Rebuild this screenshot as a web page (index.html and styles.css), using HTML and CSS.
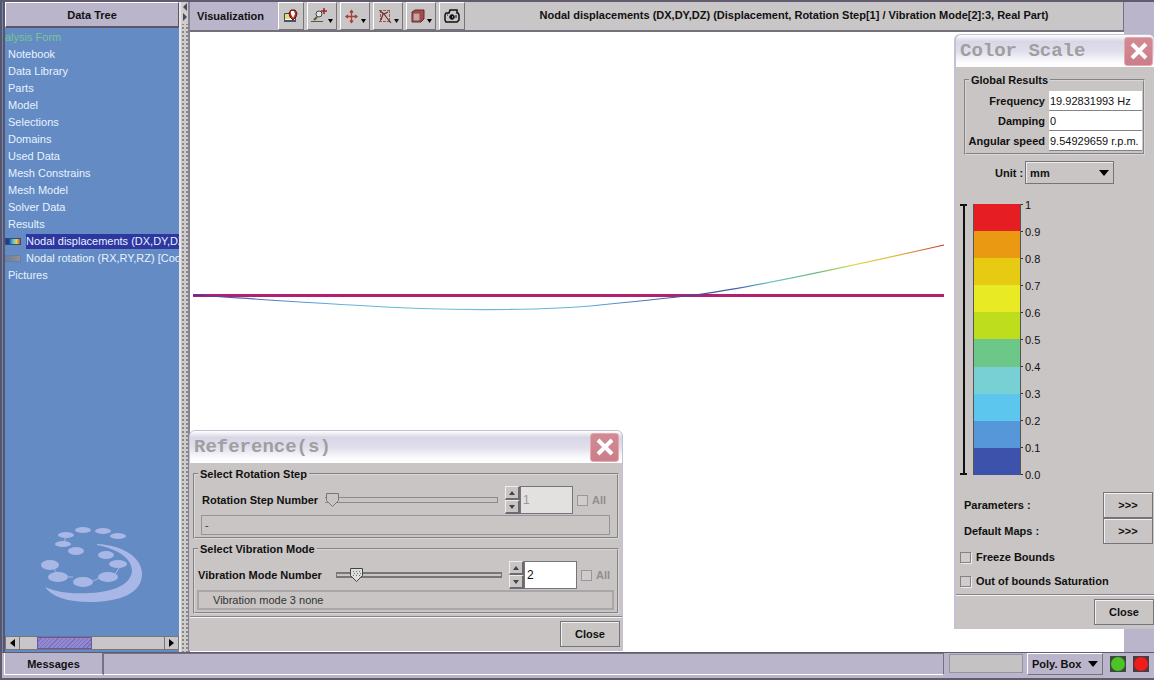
FILE: index.html
```html
<!DOCTYPE html>
<html lang="en">
<head>
<meta charset="utf-8">
<title>Visualization</title>
<link rel="stylesheet" href="styles.css">
</head>
<body>
<div class="app">
  <div class="main">
    <aside class="sidebar">
      <h2 class="sidebar-title">Data Tree</h2>
      <ul class="tree">
        <li class="tree-root">alysis Form</li>
        <li>Notebook</li>
        <li>Data Library</li>
        <li>Parts</li>
        <li>Model</li>
        <li>Selections</li>
        <li>Domains</li>
        <li>Used Data</li>
        <li>Mesh Constrains</li>
        <li>Mesh Model</li>
        <li>Solver Data</li>
        <li>Results</li>
        <li class="leaf"><i class="swatch swatch-color"></i><span class="selected">Nodal displacements (DX,DY,DZ)</span></li>
        <li class="leaf"><i class="swatch swatch-gray"></i><span>Nodal rotation (RX,RY,RZ) [Coordinates]</span></li>
        <li>Pictures</li>
      </ul>
      <svg class="logo" width="104" height="80" viewBox="0 0 104 80" fill="#a9b7e6">
        <path d="M57 17C82 18 102 30 102 47C102 66 80 75 50 75C28 75 12 70 5 60C18 66 34 67 50 66C76 65 92 56 92 43C91 31 78 22 57 18Z"/>
        <path d="M26 9 24 16M13 40l5 8M74 49l5-8M28 50h5M53 54l6-3" stroke="#a9b7e6" fill="none"/>
        <ellipse cx="43" cy="3" rx="8" ry="3"/><ellipse cx="63" cy="4" rx="8" ry="3"/><ellipse cx="78" cy="9" rx="8" ry="3"/>
        <ellipse cx="26" cy="8" rx="8" ry="3"/><ellipse cx="23" cy="17" rx="8" ry="3"/><ellipse cx="36" cy="24" rx="8" ry="4"/>
        <ellipse cx="66" cy="28" rx="8" ry="4"/><ellipse cx="78" cy="37" rx="9" ry="4"/><ellipse cx="68" cy="50" rx="10" ry="5"/>
        <ellipse cx="43" cy="55" rx="10" ry="5"/><ellipse cx="18" cy="50" rx="10" ry="5"/><ellipse cx="10" cy="38" rx="9" ry="5"/>
      </svg>
      <div class="scrollbar">
        <button class="scroll-btn" aria-label="Scroll left"><svg width="5" height="8"><path d="M5 0v8L0 4z"/></svg></button>
        <div class="scroll-track"><div class="scroll-thumb"></div></div>
        <button class="scroll-btn" aria-label="Scroll right"><svg width="5" height="8"><path d="M0 0v8l5-4z"/></svg></button>
      </div>
    </aside>
    <div class="splitter">
      <svg width="8" height="22" fill="#444a66"><path d="M5 1v8L1 5zM1 11v8l4-4z"/></svg>
    </div>
    <section class="workspace">
      <header class="toolbar">
        <h1 class="toolbar-title">Visualization</h1>
        <div class="tools">
          <button class="tool" aria-label="Display properties"><svg width="18" height="18" viewBox="0 0 18 18"><path d="M2.500 6.500h11v8h-11z" fill="#fff" stroke="#446"/><path d="M3 7h5v5H3z" fill="#e8dc70"/><path d="M2 13h12v2H2z" fill="#456"/><path d="M9 3h4l2 3-1 4-3 3-3-3-1-4z" fill="#b0302a" stroke="#611"/><path d="M9 4h3l1 3-2 4-2-4z" fill="#fff"/></svg></button>
          <button class="tool menu" aria-label="Zoom"><svg width="24" height="20" viewBox="0 0 24 20"><circle cx="9" cy="8" r="3" fill="#dde8dd" stroke="#445"/><path d="M7 11l-3 3" stroke="#665522" stroke-width="2"/><path d="M1 15.500h12" stroke="#555"/><path d="M14 2v6M11 5h6" stroke="#a02020" stroke-width="1.500"/><path d="M18 13h5l-2.500 4z"/></svg></button>
          <button class="tool menu" aria-label="Move"><svg width="24" height="20" viewBox="0 0 24 20"><path d="M8.500 5v11M3 10.500h11M7 6.500l1.500-2 1.500 2M7 14.500l1.500 2 1.500-2M5 9l-2 1.500L5 12M12 9l2 1.500-2 1.500" fill="none" stroke="#a44038" stroke-width="1.300"/><path d="M18 13h5l-2.500 4z"/></svg></button>
          <button class="tool menu" aria-label="Select area"><svg width="24" height="20" viewBox="0 0 24 20" fill="none"><path d="M3 4.500h12M3 15.500h12M4.500 4v12M13.500 4v12" stroke="#a85048" stroke-dasharray="3 1"/><path d="M4 5l4 3 4-2M7 8l-2 6M8 8l3 4 4 5" stroke="#643030" stroke-width="1.200"/><path d="M18 13h5l-2.500 4z" fill="#111"/></svg></button>
          <button class="tool menu" aria-label="View cube"><svg width="24" height="20" viewBox="0 0 24 20"><path d="M3 6l3-2h9v9l-3 3H3z" fill="#a84848" stroke="#632a2a"/><path d="M4 7h7v8H4z" fill="#c8a5a5" stroke="#844"/><path d="M18 13h5l-2.500 4z"/></svg></button>
          <button class="tool" aria-label="Snapshot"><svg width="18" height="16" viewBox="0 0 18 16" fill="none" stroke="#111"><path d="M3 5h3l1-3h7v3h1l1 2v5l-2 2H3l-1-2V7z" stroke-width="1.500"/><circle cx="9" cy="9" r="2.300" fill="#111"/><path d="M9 9h1" stroke="#fff"/><path d="M4 7h1M13 7v3"/></svg></button>
        </div>
        <p class="result-title">Nodal displacements (DX,DY,DZ) (Displacement, Rotation Step[1] / Vibration Mode[2]:3, Real Part)</p>
      </header>
      <div class="canvas">
        <svg class="plot" viewBox="0 0 934 620" preserveAspectRatio="xMinYMin meet">
          <defs>
            <linearGradient id="amp" gradientUnits="userSpaceOnUse" x1="3" y1="0" x2="754" y2="0">
              <stop offset="0" stop-color="#333a99"/><stop offset=".06" stop-color="#4866b4"/><stop offset=".2" stop-color="#62b4dc"/>
              <stop offset=".38" stop-color="#6cc0cc"/><stop offset=".52" stop-color="#62aee0"/><stop offset=".66" stop-color="#3a4ca0"/>
              <stop offset=".72" stop-color="#4060a8"/><stop offset=".77" stop-color="#68c4c8"/><stop offset=".83" stop-color="#62b478"/>
              <stop offset=".88" stop-color="#d8dc48"/><stop offset=".94" stop-color="#e0b040"/><stop offset="1" stop-color="#c83028"/>
            </linearGradient>
          </defs>
          <path d="M3 263.500H754" stroke="#b3206f" stroke-width="3"/>
          <path d="M3 263C50 266 120 271 170 273.500C250 279 350 279 410 273C450 269 480 266 512 262C570 254 670 232 754 213" fill="none" stroke="url(#amp)" stroke-width="1.200"/>
        </svg>
      </div>

      <div class="window reference">
        <div class="titlebar"><h2>Reference(s)</h2><button class="win-close" aria-label="Close window"><svg width="20" height="20"><path d="M3 3l14 14M17 3L3 17" stroke="#fff" stroke-width="4"/></svg></button></div>
        <div class="window-body">
          <fieldset class="group step">
            <legend>Select Rotation Step</legend>
            <div class="control-row">
              <label for="step">Rotation Step Number</label>
              <input class="slider" id="step" type="range" min="0" max="10" value="0" disabled>
              <div class="spinner"><button disabled aria-label="Step up"><svg width="6" height="4"><path d="M3 0l3 4H0z"/></svg></button><button disabled aria-label="Step down"><svg width="6" height="4"><path d="M0 0h6L3 4z"/></svg></button></div>
              <input class="number" type="text" value="1" aria-label="Rotation step" disabled>
              <label class="all"><input class="check" type="checkbox" disabled>All</label>
            </div>
            <input class="readout" type="text" value="-" aria-label="Rotation step description" readonly>
          </fieldset>
          <fieldset class="group mode">
            <legend>Select Vibration Mode</legend>
            <div class="control-row">
              <label for="mode">Vibration Mode Number</label>
              <input class="slider" id="mode" type="range" min="0" max="100" value="9">
              <div class="spinner"><button aria-label="Mode up"><svg width="6" height="4"><path d="M3 0l3 4H0z"/></svg></button><button aria-label="Mode down"><svg width="6" height="4"><path d="M0 0h6L3 4z"/></svg></button></div>
              <input class="number" type="text" value="2" aria-label="Vibration mode">
              <label class="all"><input class="check" type="checkbox" disabled>All</label>
            </div>
            <input class="readout" type="text" value="Vibration mode 3 none" aria-label="Vibration mode description" readonly>
          </fieldset>
        </div>
        <div class="window-footer"><button class="btn">Close</button></div>
      </div>

      <div class="window scale">
        <div class="titlebar"><h2>Color Scale</h2><button class="win-close" aria-label="Close window"><svg width="20" height="20"><path d="M3 3l14 14M17 3L3 17" stroke="#fff" stroke-width="4"/></svg></button></div>
        <div class="scale-body">
          <fieldset class="group results">
            <legend>Global Results</legend>
            <label for="freq">Frequency</label><input id="freq" type="text" value="19.92831993 Hz">
            <label for="damp">Damping</label><input id="damp" type="text" value="0">
            <label for="speed">Angular speed</label><input id="speed" type="text" value="9.54929659 r.p.m.">
          </fieldset>
          <div class="unit-row"><label for="unit">Unit :</label><select class="select" id="unit"><option>mm</option></select></div>
          <div class="legend-scale">
            <div class="range-bar"></div>
            <div class="bands"><i class="b10"></i><i class="b9"></i><i class="b8"></i><i class="b7"></i><i class="b6"></i><i class="b5"></i><i class="b4"></i><i class="b3"></i><i class="b2"></i><i class="b1"></i></div>
            <ol class="ticks"><li>1</li><li>0.9</li><li>0.8</li><li>0.7</li><li>0.6</li><li>0.5</li><li>0.4</li><li>0.3</li><li>0.2</li><li>0.1</li><li>0.0</li></ol>
          </div>
          <div class="option-row"><span>Parameters :</span><button class="btn more">&gt;&gt;&gt;</button></div>
          <div class="option-row"><span>Default Maps :</span><button class="btn more">&gt;&gt;&gt;</button></div>
          <label class="check-row"><input class="check" type="checkbox">Freeze Bounds</label>
          <label class="check-row"><input class="check" type="checkbox">Out of bounds Saturation</label>
        </div>
        <div class="window-footer"><button class="btn">Close</button></div>
      </div>
    </section>
  </div>
  <footer class="statusbar">
    <button class="messages">Messages</button>
    <div class="message-line"></div>
    <div class="progress"></div>
    <select class="select poly" aria-label="Selection shape"><option>Poly. Box</option></select>
    <button class="lamp" aria-label="Ready"><svg width="16" height="16"><path d="M0 0h16v16H0z" fill="#3c4a3c"/><circle cx="8" cy="8" r="7" fill="#4cc428"/></svg></button>
    <button class="lamp" aria-label="Stop"><svg width="16" height="16"><path d="M0 0h16v16H0z" fill="#4a3c3c"/><circle cx="8" cy="8" r="7" fill="#f01c1c"/></svg></button>
  </footer>
</div>
</body>
</html>
```
FILE: styles.css
```css
* { box-sizing: border-box; }
body, h1, h2, p, ul, ol, fieldset { margin: 0; padding: 0; }
ul, ol { list-style: none; }
body, button, input, select {
  font-family: "Liberation Sans", Arial, sans-serif;
  font-size: 11px;
  color: #111;
}
body { background: #bbb5cc; font-weight: bold; line-height: 14px; }
h1, h2, button, select { font-size: 11px; font-weight: bold; }
button { padding: 0; border: 0; background: none; border-radius: 0; display: flex; align-items: center; justify-content: center; }

.app { display: flex; flex-direction: column; min-height: 100vh; overflow: hidden; border-top: 2px solid #625b6d; }
.main { display: flex; flex: 1; }

/* Data tree */
.sidebar {
  width: 179px; flex: none; display: flex; flex-direction: column; overflow: hidden;
  border-left: 5px double #59566c; background: #648bc4; padding-bottom: 2px;
}
.sidebar-title {
  height: 26px; line-height: 24px; text-align: center; background: #bbb5cc;
  border: 1px solid #fff; border-right-color: #59566c; border-bottom: 2px solid #59566c;
}
.tree { padding: 1px 0 0 3px; font-weight: normal; line-height: 17px; color: #e6f3ff; white-space: nowrap; }
.tree-root { margin-left: -3px; color: #77c690; }
.leaf { display: flex; align-items: center; gap: 5px; height: 17px; margin-left: -3px; }
.leaf span { flex: 1; }
.swatch { width: 16px; height: 7px; flex: none; border: 1px solid #334d80; }
.swatch-color { background: linear-gradient(90deg, #223a88 20%, #3cb8dc 45%, #e0d850 75%, #c84c38); }
.swatch-gray { background: linear-gradient(90deg, #6c7ea0, #94928c); border-color: #6480aa; }
.selected { background: #2e36a0; line-height: 15px; }
.logo { margin: auto auto 29px 35px; flex: none; }
.scrollbar { display: flex; height: 14px; background: #c9c5c8; border: 1px solid #777; }
.scroll-btn { width: 14px; border-right: 1px solid #777; }
.scroll-btn:last-child { border: 0; border-left: 1px solid #777; }
.scroll-track { flex: 1; padding: 0 42% 0 10%; display: flex; }
.scroll-thumb { flex: 1; border: 1px solid #6258a8; background: repeating-linear-gradient(135deg, #9388d2 0 2px, #7b70c0 2px 3px); }

.splitter {
  width: 11px; flex: none; padding-left: 1px;
  border-left: 2px solid #e8e6e2; border-right: 2px solid #88838c;
  background: #cfcccc radial-gradient(#8a878c 30%, transparent 40%) 0 0 / 4px 4px;
}
.splitter svg { background: #cfcccc; display: block; width: 6px; }

/* Visualization */
.workspace { position: relative; flex: 1; min-width: 0; display: flex; flex-direction: column; }
.toolbar { display: flex; height: 30px; margin-right: 30px; background: #c9c6c7; border-bottom: 2px solid #74707a; border-right: 1px solid #77717e; }
.toolbar-title { padding: 0 14px 0 7px; line-height: 28px; background: #bbb5cc; }
.tools { display: flex; gap: 3px; }
.tool { width: 26px; height: 28px; border: 1px solid #fff; border-right-color: #77737a; border-bottom-color: #77737a; }
.tool.menu { width: 30px; }
.result-title { flex: 1; text-align: center; line-height: 27px; white-space: nowrap; }
.canvas { flex: 1; margin-right: 30px; background: #fff; }
.plot { display: block; width: 100%; }

/* Floating windows */
.window { position: absolute; background: #c8c5c4; border: 1px solid #c4c2d2; border-radius: 6px 6px 0 0; display: flex; flex-direction: column; }
.titlebar {
  display: flex; align-items: center; justify-content: space-between; height: 32px; padding: 0 1px 0 4px; border-radius: 5px 5px 0 0;
  background: linear-gradient(#fff 0, #d9d7e6 20%, #dfdeea 50%, #fbfbfe 85%, #fff);
}
.titlebar h2 { font: bold 19px/30px "Liberation Mono", monospace; color: #9f9ea0; }
.win-close { width: 29px; height: 29px; background: linear-gradient(#d38a93, #cb7e8a); border: 1px solid #e3aab0; border-radius: 3px; }
.group { min-width: 0; border: 2px groove #d8d6d8; }
.group legend { padding: 0 2px; margin-left: 1px; line-height: 14px; }
.btn { min-width: 60px; height: 26px; border: 1px solid #77737a; box-shadow: inset 1px 1px #f2f0f0; }
.window-footer { display: flex; justify-content: flex-end; padding: 4px 0 3px; border-top: 1px solid #85828e; box-shadow: inset 0 1px #f4f4f4; }

.reference { left: -1px; bottom: 1px; width: 434px; }
.reference .titlebar { padding-right: 3px; }
.reference .window-footer { padding-right: 2px; }
.window-body { display: flex; flex-direction: column; gap: 3px; padding: 4px 3px 2px 3px; }
.step { padding: 5px 7px 2px 6px; }
.step legend { margin-left: -3px; }
.mode { padding: 5px 3px 2px 2px; }
.control-row { display: flex; align-items: center; height: 28px; }
.control-row > label:first-child { flex: none; padding-left: 1px; }
.slider { flex: 1; min-width: 0; height: 18px; margin: 0 7px; appearance: none; background: linear-gradient(#8c8989, #8c8989) 0 6px / 100% 1px no-repeat, linear-gradient(#8c8989, #8c8989) 0 11px / 100% 1px no-repeat, linear-gradient(#8c8989, #8c8989) 100% 6px / 1px 6px no-repeat; }
.slider::-webkit-slider-thumb {
  appearance: none; width: 15px; height: 16px; border: 0;
  background: url("data:image/svg+xml,%3Csvg xmlns='http://www.w3.org/2000/svg' width='15' height='16'%3E%3Cpath d='M1.5 1.5h12v7l-6 6-6-6z' fill='%23c8c5c4' stroke='%23777'/%3E%3C/svg%3E") no-repeat;
}
.mode .slider { margin-left: 14px; background: linear-gradient(#c8c5c4, #c8c5c4) 1px 8px / calc(100% - 2px) 2px no-repeat, linear-gradient(#777, #777) 0 6px / 100% 6px no-repeat; }
.mode .slider::-webkit-slider-thumb {
  background: url("data:image/svg+xml,%3Csvg xmlns='http://www.w3.org/2000/svg' width='15' height='16'%3E%3Cpath d='M1.5 1.5h12v7l-6 6-6-6z' fill='%23ddd' stroke='%23444'/%3E%3Cpath d='M4 4.5h8M5 6.5h8M4 8.500h8' stroke='%23777' stroke-dasharray='1 2'/%3E%3C/svg%3E") no-repeat;
}
.spinner { width: 15px; height: 28px; display: flex; flex-direction: column; flex: none; }
.spinner button { flex: 1; border: 1px solid #eee; border-right: 2px solid #6c6970; border-bottom: 2px solid #6c6970; }
.spinner svg { fill: #444; }
.number { width: 53px; height: 28px; padding: 0 2px; font-size: 12px; border: 1px solid #77737a; background: #fff; }
.number:disabled { color: #999; background: #e2e1e0; }
.all { display: flex; align-items: center; gap: 4px; margin: 0 4px; color: #918e90; }
.check { appearance: none; width: 11px; height: 11px; margin: 0; border: 1px solid #858188; background: #cfcccb; box-shadow: 1px 1px #eee; }
.check:disabled { border-color: #9a9799; box-shadow: none; }
.readout { display: block; width: 100%; height: 20px; margin-top: 1px; padding: 0 3px; background: transparent; border: 1px solid #96939a; color: #333; }
.mode .readout { padding-left: 14px; border-width: 2px; border-color: #a9a6a9; }

.scale { right: 0; top: 32px; width: 200px; border-width: 1px 0 1px 2px; }
.scale-body { padding: 6px 0 0 8px; }
.results { display: grid; grid-template-columns: auto 93px; justify-content: end; align-items: center; column-gap: 4px; margin-right: 9px; padding: 4px 1px 2px 0; }
.results label { text-align: right; white-space: nowrap; }
.results legend { margin-left: 3px; }
.results input { width: 93px; height: 20px; border: 0; border-bottom: 1px solid #85828e; padding: 0 0 0 1px; background: #fff; }
.unit-row { display: flex; align-items: center; gap: 2px; margin: 6px 0 0 31px; }
.select {
  appearance: none; width: 89px; height: 23px; padding: 0 4px; border: 1px solid #77737a; border-radius: 0; box-shadow: inset 1px 1px #eee;
  background: url("data:image/svg+xml,%3Csvg xmlns='http://www.w3.org/2000/svg' width='10' height='6'%3E%3Cpath d='M0 0h10L5 6z'/%3E%3C/svg%3E") right 4px center no-repeat;
}
.legend-scale { display: flex; margin: 20px 0 17px; height: 271px; }
.range-bar { width: 7px; margin: 0 6px 0 -4px; border-top: 2px solid #111; border-bottom: 2px solid #111; background: linear-gradient(#111, #111) center / 2px 100% no-repeat; }
.bands { width: 48px; display: flex; flex-direction: column; border: solid #555; border-width: 0 1px; }
.bands i { flex: 1; }
.b10 { background: #e61e24; } .b9 { background: #ea9a12; } .b8 { background: #e6cb12; } .b7 { background: #e8eb24; }
.b6 { background: #bedd1c; } .b5 { background: #6cc788; } .b4 { background: #78d0d5; } .b3 { background: #5cc6ee; }
.b2 { background: #5597d8; } .b1 { background: #3d52ab; }
.ticks { margin: -13px 0; display: flex; flex-direction: column; font-weight: normal; }
.ticks li { flex: 1; display: flex; align-items: center; gap: 2px; }
.ticks li::before { content: ""; width: 2px; height: 1px; background: #333; }
.option-row { display: flex; align-items: center; justify-content: space-between; padding-right: 1px; }
.more { width: 50px; min-width: 50px; }
.check-row { display: flex; align-items: center; gap: 5px; height: 24px; margin-left: -4px; }
.option-row + .check-row { margin-top: 1px; }
.scale .window-footer { margin-top: 1px; }

/* Status bar */
.statusbar { display: flex; height: 28px; padding: 0 5px 3px 2px; border-top: 1px solid #625b6d; border-bottom: 2px solid #625b6d; border-left: 2px solid #625b6d; align-items: stretch; }
.messages { width: 100px; border: 1px solid #fff; border-right: 2px solid #77727f; border-top: 0; }
.message-line { flex: 1; border: 1px solid #77727f; border-width: 1px 1px 0 0; border-bottom: 1px solid #fff; }
.progress { width: 74px; margin: 1px 4px 2px 5px; background: #c5c2c4; border: 1px solid #96939e; }
.poly { width: 76px; height: 22px; margin-right: 7px; border-color: #fff #77737a #77737a #fff; box-shadow: none; }
.lamp { width: 16px; }
.lamp + .lamp { margin-left: 7px; }
```
